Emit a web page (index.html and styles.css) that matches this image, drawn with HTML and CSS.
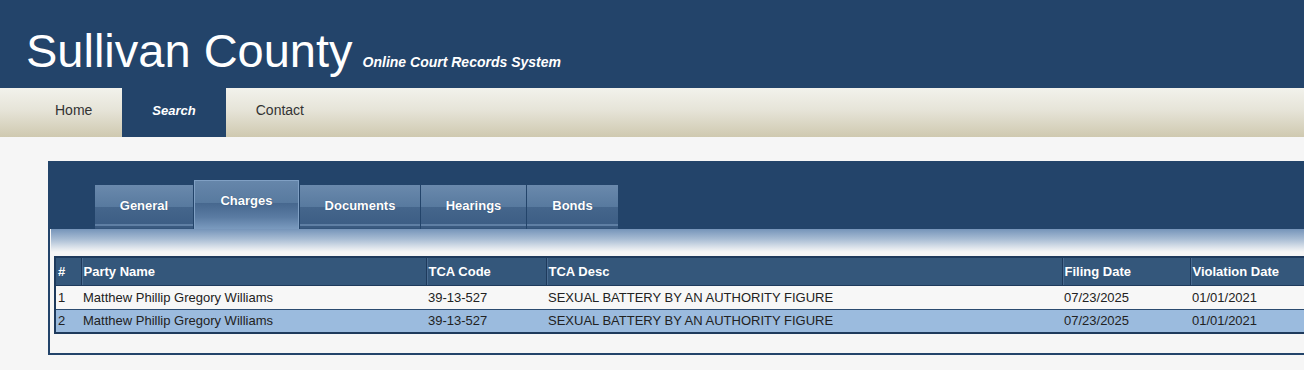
FILE: index.html
```
<!DOCTYPE html>
<html>
	<head>
		<meta charset="UTF-8">
		<title>Sullivan County - Online Court Records System</title>
		<link rel="stylesheet" href="styles.css">
	</head>
	<body>
		<div id="header">
			<span class="title">Sullivan County</span>
			<span class="subtitle">Online Court Records System</span>
		</div>
		<div id="nav">
			<a href="#">Home</a>
			<a href="#" class="active">Search</a>
			<a href="#">Contact</a>
		</div>

		<div id="content">
			<div class="panel">
				<ul class="tabs">
					<li><a href="#">General</a></li>
					<li class="current"><a href="#">Charges</a></li>
					<li><a href="#">Documents</a></li>
					<li><a href="#">Hearings</a></li>
					<li><a href="#">Bonds</a></li>
				</ul>
				<div class="fade"></div>
				<table class="grid">
					<thead>
						<tr>
							<th class="c-num">#</th>
							<th class="c-name">Party Name</th>
							<th class="c-code">TCA Code</th>
							<th class="c-desc">TCA Desc</th>
							<th class="c-fdate">Filing Date</th>
							<th>Violation Date</th>
						</tr>
					</thead>
					<tbody>
						<tr>
							<td>1</td>
							<td>Matthew Phillip Gregory Williams</td>
							<td>39-13-527</td>
							<td>SEXUAL BATTERY BY AN AUTHORITY FIGURE</td>
							<td>07/23/2025</td>
							<td>01/01/2021</td>
						</tr>
						<tr class="selected">
							<td>2</td>
							<td>Matthew Phillip Gregory Williams</td>
							<td>39-13-527</td>
							<td>SEXUAL BATTERY BY AN AUTHORITY FIGURE</td>
							<td>07/23/2025</td>
							<td>01/01/2021</td>
						</tr>
					</tbody>
				</table>
			</div>
		</div>
	</body>
</html>
```
FILE: styles.css
```
*{padding:0;margin:0;box-sizing:border-box;}
html,body{overflow:hidden;}
body{background:#f6f6f6;font-family:"Liberation Sans",Arial,sans-serif;color:#222;}

#header{height:88px;background:#23446a;color:#fff;display:flex;align-items:baseline;padding:27px 0 0 26px;gap:10px;}
#header .title{font-size:47px;line-height:47px;}
#header .subtitle{font-size:14px;font-weight:bold;font-style:italic;}

#nav{height:49px;padding-left:25px;display:flex;background:linear-gradient(#f2f2ec,#e6e4d8 45%,#cfc9b0);}
#nav a{display:block;padding:0 30px;line-height:45px;font-size:14px;color:#333;text-decoration:none;}
#nav a.active{background:#23446a;color:#fff;font-weight:bold;font-style:italic;font-size:13px;height:49px;}

#content{padding:24px 0 0 48px;}
.panel{width:1330px;border:2px solid #23446a;border-top:0;padding-bottom:19px;}

.tabs{list-style:none;display:flex;align-items:flex-end;gap:1px;height:68px;padding-left:45px;background:#23446a;}
.tabs li{height:44px;border-bottom:1px solid #34547a;
	background:linear-gradient(#6a89ac,#587a9f 50%,#45668c 50%,#3d5e85 90%,#5f7fa4 90%,#5f7fa4 95%,#3a5a80 95%);}
.tabs li a{display:block;padding:13px 0 0;line-height:16px;font-size:13px;font-weight:bold;color:#fff;text-decoration:none;text-align:center;text-shadow:0 0 1px #2a4a70;}
.tabs li:nth-child(1) a{width:98px;}
.tabs li:nth-child(2) a{width:103px;}
.tabs li:nth-child(3) a{width:120px;}
.tabs li:nth-child(4) a{width:105px;}
.tabs li:nth-child(5) a{width:91px;}
.tabs li.current{height:49px;border:1px solid #80a0c4;border-bottom:0;
	background:linear-gradient(#6686aa,#587a9f 45%,#46678e 46%,#5a7ba2 75%,#7b9bbf);}
.tabs li.current a{padding-top:12px;}

.fade{height:23px;margin-left:1px;background:linear-gradient(#7594b9,#a9bdd4 45%,#e3e8ee 85%,#f6f6f6);}

.grid{margin:4px 0 0 4px;width:1318px;border-collapse:collapse;border:2px solid #1e3a5c;font-size:13px;}
.grid th{height:28px;background:#34577b;color:#fff;text-align:left;padding:0 2px;border-left:1px solid #1e3a5c;border-bottom:1px solid #1e3a5c;box-shadow:inset 1px 0 0 #4a6b90;}
.grid th:first-child{border-left:0;box-shadow:none;}
.grid td{height:24px;padding:0 2px;border-bottom:1px solid #2b4b70;background:#f7f7f7;color:#222;}
.grid tr.selected td{background:#9bbbde;}
.c-num{width:26px;}
.c-name{width:345px;}
.c-code{width:120px;}
.c-desc{width:516px;}
.c-fdate{width:128px;}
```
